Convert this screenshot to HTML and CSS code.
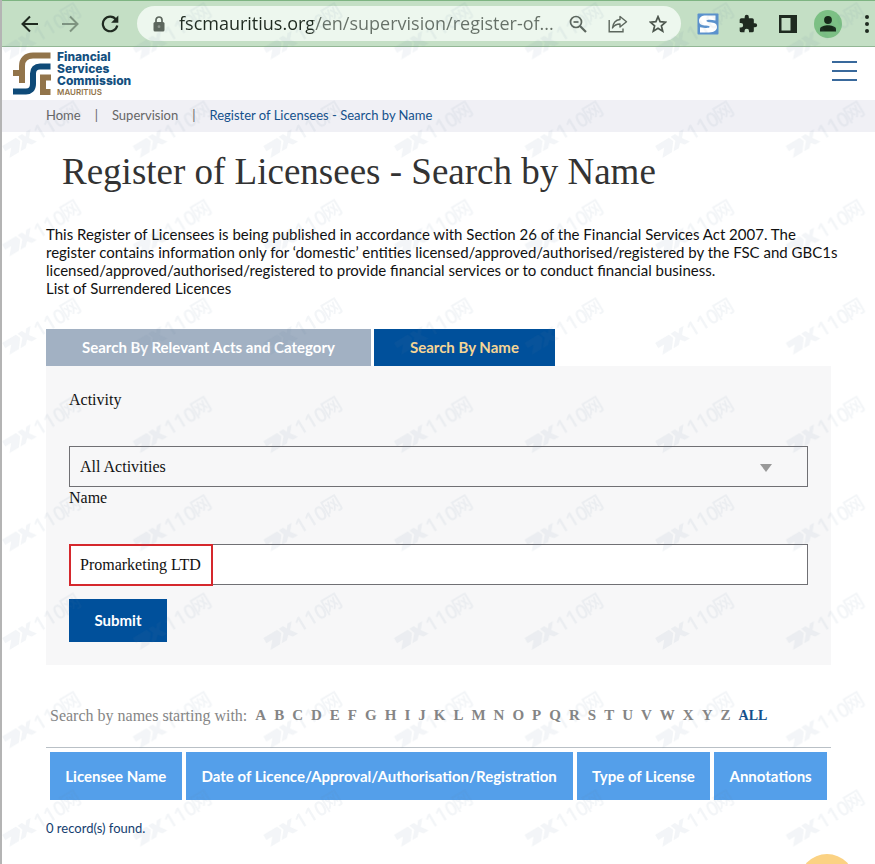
FILE: index.html
```html
<!DOCTYPE html>
<html lang="en">
<head>
    <meta charset="UTF-8">
    <meta name="viewport" content="width=device-width, initial-scale=1.0">
    <title>Register of Licensees - Search by Name</title>
    <link rel="stylesheet" href="styles.css">
</head>
<body>

    <div class="window">
        <div class="toolbar">
            <button type="button" class="tool" aria-label="Back">
                <svg width="18" height="18" viewBox="0 0 18 18" fill="none" stroke="#1f2a20" stroke-width="2"><path d="M17 9H2M9 1.500L1.500 9L9 16.500"/></svg>
            </button>
            <button type="button" class="tool" aria-label="Forward">
                <svg width="18" height="18" viewBox="0 0 18 18" fill="none" stroke="#7f9480" stroke-width="2"><path d="M1 9H16M9 1.500L16.500 9L9 16.500"/></svg>
            </button>
            <button type="button" class="tool" aria-label="Reload">
                <svg width="18" height="18" viewBox="0 0 18 18"><path d="M15 4.500A7.300 7.300 0 1 0 16.300 10.500" fill="none" stroke="#1f2a20" stroke-width="2.200"/><path d="M17.300 0.500V7.700H10.100Z" fill="#1f2a20"/></svg>
            </button>
            <div class="address">
                <svg class="lock" width="12" height="16" viewBox="0 0 12 16"><rect x="0.500" y="6" width="11" height="9.500" rx="1.500" fill="#5c665d"/><path d="M3 6.500V4a3 3 0 0 1 6 0V6.500" fill="none" stroke="#5c665d" stroke-width="1.700"/><circle cx="6" cy="10.700" r="1.400" fill="#8b948c"/></svg>
                <input type="text" class="url" aria-label="Address" value="fscmauritius.org/en/supervision/register-of...">
                <button type="button" class="tool" aria-label="Zoom">
                    <svg width="18" height="18" viewBox="0 0 18 18" fill="none" stroke="#5c665d" stroke-width="1.700"><circle cx="7" cy="7" r="5.500"/><path d="M11 11L17 17" stroke-width="2.200"/><path d="M4.500 7H9.500"/></svg>
                </button>
                <button type="button" class="tool" aria-label="Share">
                    <svg width="20" height="18" viewBox="0 0 20 18" fill="none" stroke="#5c665d" stroke-width="1.400"><path d="M1.200 5V16.800H15V13.500"/><path d="M12 1.500L18.500 6.700L12 12V9C8.500 9 6.200 10.200 4.500 13C5 8.500 7.500 5 12 4.500Z" stroke-linejoin="round"/></svg>
                </button>
                <button type="button" class="tool" aria-label="Bookmark">
                    <svg width="18" height="18" viewBox="0 0 18 18" fill="none" stroke="#4c564d" stroke-width="1.700"><path d="M9 1.700L11.100 6.700L16.600 7.200L12.400 10.800L13.700 16.200L9 13.300L4.300 16.200L5.600 10.800L1.400 7.200L6.900 6.700Z"/></svg>
                </button>
            </div>
            <button type="button" class="tool" aria-label="Extension">
                <svg width="22" height="22" viewBox="0 0 22 22"><rect x="0.500" y="0.500" width="21" height="21" rx="1" fill="#5b92cd"/><path d="M18.500 2.500H9C4.500 2.500 2 4.500 2 8C2 11.500 5 12.300 9 12.600C12 12.900 13 13.300 12.500 14.300C12 15.200 8 15.200 3 14.200V19.500H12C17.500 19.500 20 17 20 13.800C20 10.500 17.500 9.500 13 9.200C10 9 9 8.500 9.500 7.600C10 6.600 14 6.600 18.500 7.400Z" fill="#fff"/></svg>
            </button>
            <button type="button" class="tool" aria-label="Extensions">
                <svg width="20" height="20" viewBox="0 0 24 24"><path d="M20.500 11H19V7a2 2 0 0 0-2-2h-4V3.500a2.500 2.500 0 0 0-5 0V5H4a2 2 0 0 0-2 2v3.800h1.500a2.700 2.700 0 0 1 0 5.400H2V20a2 2 0 0 0 2 2h3.800v-1.500a2.700 2.700 0 0 1 5.400 0V22H17a2 2 0 0 0 2-2v-4h1.500a2.500 2.500 0 0 0 0-5z" fill="#1f2a20"/></svg>
            </button>
            <button type="button" class="tool" aria-label="Side panel">
                <svg width="18" height="18" viewBox="0 0 18 18"><rect width="18" height="18" fill="#1f2a20"/><rect x="2.500" y="3" width="9" height="12.500" fill="#c4dfc5"/></svg>
            </button>
            <button type="button" class="tool" aria-label="Profile">
                <svg width="28" height="28" viewBox="0 0 28 28"><circle cx="14" cy="14" r="14" fill="#7cc084"/><circle cx="14" cy="10" r="3.900" fill="#172a19"/><path d="M6 21.500V19C6 16.500 11 15.300 14 15.300S22 16.500 22 19V21.500Z" fill="#172a19"/></svg>
            </button>
            <button type="button" class="tool menu" aria-label="Menu">
                <svg width="16" height="18" viewBox="0 0 16 18" fill="#1f2a20"><circle cx="8" cy="2" r="2"/><circle cx="8" cy="9" r="2"/><circle cx="8" cy="16" r="2"/></svg>
            </button>
        </div>

        <header class="header">
            <a href="#" class="logo">
                <svg width="38" height="43" viewBox="0 0 38 43"><g fill="none" stroke="#92744a" stroke-width="6"><path d="M37.500 3.500H20C13 3.500 9 7.500 9 14V31"/><path d="M0 21H9"/><path d="M38 25.500H30V40H37.500"/></g><path d="M37.500 14.500H27C22.500 14.500 20 17 20 21.500V32C20 37 17 39.500 13 39.500H0" fill="none" stroke="#0e4a78" stroke-width="6"/></svg>
                <span class="logo-text">Financial<br>Services<br>Commission<small>MAURITIUS</small></span>
            </a>
            <button type="button" class="burger" aria-label="Open navigation"><i></i><i></i><i></i></button>
        </header>

        <nav class="breadcrumb">
            <a href="#">Home</a>
            <span>|</span>
            <a href="#">Supervision</a>
            <span>|</span>
            <a href="#" class="current">Register of Licensees - Search by Name</a>
        </nav>

        <main class="content">
            <h1>Register of Licensees - Search by Name</h1>
            <p class="intro">This Register of Licensees is being published in accordance with Section 26 of the Financial Services Act 2007. The register contains information only for ‘domestic’ entities licensed/approved/authorised/registered by the FSC and GBC1s licensed/approved/authorised/registered to provide financial services or to conduct financial business.<br>List of Surrendered Licences</p>

            <div class="tabs">
                <button type="button" class="tab">Search By Relevant Acts and Category</button>
                <button type="button" class="tab active">Search By Name</button>
            </div>
            <form class="panel">
                <label for="activity">Activity</label>
                <div class="field">
                    <select id="activity">
                        <option>All Activities</option>
                    </select>
                    <svg class="arrow" width="12" height="8" viewBox="0 0 12 8"><path d="M0 0H12L6 8Z" fill="#999"/></svg>
                </div>
                <label for="name">Name</label>
                <div class="field">
                    <input type="text" id="name" value="Promarketing LTD">
                    <div class="highlight"></div>
                </div>
                <button type="button" class="submit">Submit</button>
            </form>

            <div class="letters">
                <span class="letters-label">Search by names starting with:</span>
                <a href="#">A</a><a href="#">B</a><a href="#">C</a><a href="#">D</a><a href="#">E</a><a href="#">F</a><a href="#">G</a><a href="#">H</a><a href="#">I</a><a href="#">J</a><a href="#">K</a><a href="#">L</a><a href="#">M</a><a href="#">N</a><a href="#">O</a><a href="#">P</a><a href="#">Q</a><a href="#">R</a><a href="#">S</a><a href="#">T</a><a href="#">U</a><a href="#">V</a><a href="#">W</a><a href="#">X</a><a href="#">Y</a><a href="#">Z</a><a href="#" class="all">ALL</a>
            </div>

            <table class="results">
                <thead>
                    <tr>
                        <th>Licensee Name</th>
                        <th>Date of Licence/Approval/Authorisation/Registration</th>
                        <th>Type of License</th>
                        <th>Annotations</th>
                    </tr>
                </thead>
            </table>
            <p class="count">0 record(s) found.</p>
        </main>
    </div>

    <button type="button" class="to-top" aria-label="Back to top"></button>

    <!-- repeated watermark over the whole page -->
    <svg class="watermark" width="100%" height="100%" aria-hidden="true">
        <defs>
            <pattern id="mark" x="0" y="-8" width="130.600" height="98.400" patternUnits="userSpaceOnUse">
                <g transform="translate(13 62) rotate(-31)">
                    <path d="M-6 -11H10L12 -6L5 3H-6L1 -5H-6Z"/>
                    <path d="M12 -11H17L19 -7L22 -11H27L21 -4L26 3H20L17 -1L13 3H7L14 -5Z"/>
                    <text x="28" y="3">110</text>
                    <text x="60" y="2" class="cjk">网</text>
                </g>
            </pattern>
        </defs>
        <rect width="100%" height="100%" fill="url(#mark)"/>
    </svg>

</body>
</html>
```

FILE: styles.css
```css
* {
    box-sizing: border-box;
}
body {
    margin: 0;
    font-family: Lato, "Liberation Sans", sans-serif;
    color: #111;
    background: #fff;
}
a {
    color: inherit;
    text-decoration: none;
}
button {
    padding: 0;
    border: 0;
    background: none;
    font-family: inherit;
    cursor: pointer;
}
.window {
    min-height: 100vh;
    border-left: 2px solid #b4b4b4;
}

/* browser bar */
.toolbar {
    display: flex;
    align-items: center;
    height: 47px;
    padding-left: 8px;
    background: #c4dfc5;
    border-top: 1px solid #7eb482;
    border-bottom: 1px solid #93b795;
}
.tool {
    display: flex;
    flex: none;
    align-items: center;
    justify-content: center;
    width: 40px;
    height: 35px;
}
.tool.menu {
    justify-content: flex-end;
    width: 27px;
}
.address {
    display: flex;
    flex: 1;
    align-items: center;
    min-width: 0;
    height: 35px;
    margin: 0 7px;
    padding: 0 3px 0 16px;
    border-radius: 18px;
    background: #edf7ee;
}
.lock {
    flex: none;
}
.url {
    flex: 1;
    min-width: 0;
    margin-left: 14px;
    padding: 0 0 2px;
    border: 0;
    outline: 0;
    font: 18px "Open Sans", "Noto Sans", sans-serif;
    /* host is darker than the path */
    color: transparent;
    background: linear-gradient(90deg, #1f2a20 134px, #667067 134px);
    -webkit-background-clip: text;
    background-clip: text;
}

/* site header */
.header {
    display: flex;
    align-items: center;
    justify-content: space-between;
    height: 53px;
    padding: 0 18px 0 11px;
}
.logo {
    display: flex;
    align-items: center;
    gap: 6px;
}
.logo-text {
    font: 800 12px/12px Inter, sans-serif;
    color: #14507f;
}
.logo-text small {
    display: block;
    font-size: 8px;
    line-height: 10px;
    font-weight: 600;
    color: #92744a;
}
.burger {
    display: flex;
    flex-direction: column;
    gap: 7px;
    width: 25px;
    padding-bottom: 5px;
}
.burger i {
    height: 2px;
    background: #39699c;
}

.breadcrumb {
    display: flex;
    align-items: center;
    gap: 14px;
    height: 32px;
    padding: 0 44px 2px;
    font-size: 13px;
    color: #666;
    background: #f0f0f5;
}
.breadcrumb .current {
    color: #14508c;
}

.content {
    padding: 0 44px;
}
h1 {
    margin: 0;
    padding: 18px 16px 0;
    font: 37px/44px "Liberation Serif", serif;
    color: #333;
}
.intro {
    margin: 31px -15px 0 0;
    font-size: 15px;
    line-height: 18px;
}

/* search form */
.tabs {
    display: flex;
    gap: 3px;
    margin-top: 32px;
}
.tab {
    height: 37px;
    padding: 0 36px 2px;
    font-size: 15px;
    font-weight: bold;
    color: #fff;
    background: #a2b1c3;
}
.tab.active {
    color: #f5d595;
    background: #00509b;
}
.panel {
    padding: 23px;
    font: 16px/21px "Liberation Serif", serif;
    background: #f7f7f8;
}
.panel label {
    display: block;
}
.field {
    position: relative;
    margin-top: 36px;
}
.field select,
.field input {
    display: block;
    width: 100%;
    height: 41px;
    padding: 0 10px;
    border: 1px solid #707074;
    border-radius: 0;
    font: inherit;
    color: #111;
    background: #fff;
    appearance: none;
}
.field select {
    background: #f7f7f8;
}
.arrow {
    position: absolute;
    top: 18px;
    right: 36px;
    pointer-events: none;
}
.highlight {
    position: absolute;
    top: 0;
    left: 0;
    width: 144px;
    height: 42px;
    border: 2px solid #d5282d;
    pointer-events: none;
}
.submit {
    display: block;
    width: 98px;
    height: 43px;
    margin-top: 14px;
    padding-bottom: 2px;
    font: bold 15px Lato, sans-serif;
    color: #fff;
    background: #00509b;
}

/* results */
.letters {
    display: flex;
    gap: 8px;
    margin-top: 40px;
    padding-left: 4px;
    font: bold 15px/21px "Liberation Serif", serif;
    color: #858585;
}
.letters-label {
    font-size: 16px;
    font-weight: normal;
}
.letters .all {
    font-size: 14px;
    color: #14508c;
}
.results {
    width: 100%;
    margin-top: 21px;
    border-top: 1px solid #b9c0c6;
    border-spacing: 4px;
}
.results th {
    height: 48px;
    padding: 0 15px;
    font-size: 15px;
    color: #fff;
    background: #549fea;
}
.count {
    margin: 15px 0 0;
    font-size: 13px;
    line-height: 18px;
    color: #14406f;
}
.to-top {
    position: fixed;
    right: 20px;
    bottom: -46px;
    width: 56px;
    height: 56px;
    border-radius: 50%;
    background: #fbd283;
}
.watermark {
    position: fixed;
    top: 0;
    left: 0;
    fill: #6482a0;
    opacity: 0.08;
    pointer-events: none;
}
.watermark text {
    font: 600 20px "Open Sans", sans-serif;
}
.watermark .cjk {
    font: 500 20px "Noto Sans CJK SC", sans-serif;
}
```
